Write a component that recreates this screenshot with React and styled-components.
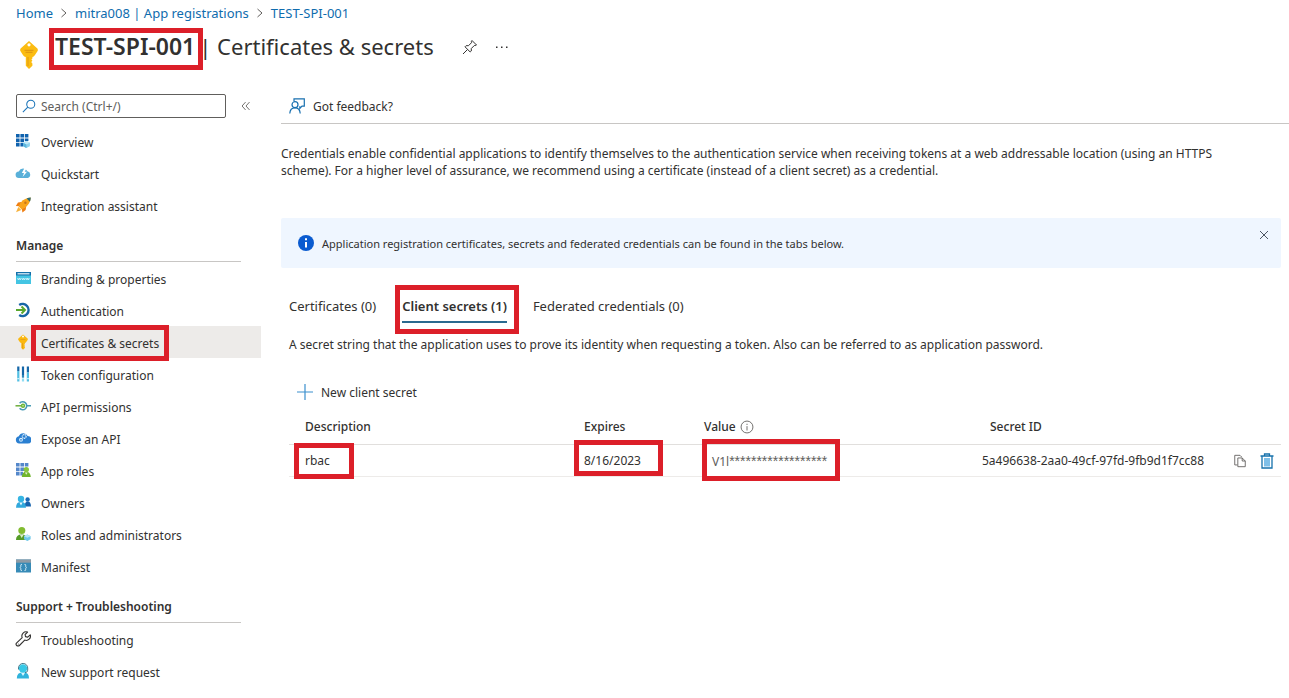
import React from "react"
import styled, { createGlobalStyle } from "styled-components"

const GlobalStyle = createGlobalStyle`
  *, *::before, *::after { box-sizing: border-box; }
  body {
    margin: 0;
    background: #fff;
    color: #323130;
    font-family: "Noto Sans", "Open Sans", sans-serif;
    font-size: 12px;
    line-height: 18px;
  }
  button, input { font: inherit; color: inherit; }
  a { color: inherit; text-decoration: none; }
  h1, h2, p, ul, ol { margin: 0; padding: 0; }
  ul, ol { list-style: none; }
  svg { display: block; flex: none; }
`

// red frame drawn over the part, "top right bottom left" outset
const Marked = styled.span`
  position: relative;

  &::after {
    content: "";
    position: absolute;
    inset: ${({ $inset }) => $inset};
    border: 5px solid #dc1f29;
    pointer-events: none;
  }
`

const Page = styled.div`
  padding-bottom: 8px;
`

const Breadcrumb = styled.ol`
  display: flex;
  align-items: center;
  gap: 8px;
  padding: 4px 16px 0;
  color: #0f6cae;
  font-size: 13px;
`

const Crumb = styled.li`
  display: flex;
  align-items: center;
  gap: 8px;
`

const TitleBar = styled.header`
  display: flex;
  align-items: center;
  height: 50px;
  padding: 0 16px;
`

const KeySlot = styled.div`
  width: 39px;
  padding: 15px 0 0 4px;
`

const Title = styled.h1`
  display: flex;
  align-items: baseline;
  gap: 4px;
  padding-bottom: 2px;
  font-size: 22px;
  font-weight: 400;
  line-height: 30px;
`

const TitleName = styled(Marked)`
  font-size: 23px;
  font-weight: 600;
`

const IconButton = styled.button`
  display: inline-flex;
  align-items: center;
  justify-content: center;
  width: 16px;
  height: 16px;
  padding: 0;
  border: 0;
  background: none;
`

const TitleTools = styled.div`
  display: flex;
  gap: 16px;
  padding-left: 28px;
`

const Body = styled.div`
  display: flex;
  align-items: flex-start;
  padding-top: 22px;
`

const Sidebar = styled.nav`
  flex: none;
  width: 261px;
`

const SearchRow = styled.div`
  display: flex;
  align-items: center;
  gap: 12px;
  height: 24px;
  margin-bottom: 7px;
  padding-left: 16px;
`

const SearchBox = styled.label`
  display: flex;
  align-items: center;
  gap: 5px;
  width: 210px;
  height: 24px;
  padding: 0 5px;
  border: 1px solid #605e5c;
  border-radius: 2px;
`

const SearchInput = styled.input`
  flex: 1;
  min-width: 0;
  padding: 2px 0 0;
  border: 0;
  outline: 0;
  background: none;

  &::placeholder {
    color: #605e5c;
    opacity: 1;
  }
`

const GroupTitle = styled.h2`
  height: 41px;
  margin: 0 20px 0 16px;
  padding-top: 16px;
  border-bottom: 1px solid #c8c6c4;
  font-size: 12px;
  font-weight: 600;
`

const NavLink = styled.a`
  display: flex;
  align-items: center;
  gap: 10px;
  height: 32px;
  padding-left: 15px;
  background: ${({ $active }) => ($active ? "#edebe9" : "none")};
`

const NavLabel = styled.span`
  padding-top: 4px;
`

const Main = styled.main`
  flex: 1;
  min-width: 0;
  padding-left: 20px;
`

const Toolbar = styled.div`
  height: 30px;
  border-bottom: 1px solid #c8c6c4;
`

const CommandButton = styled.button`
  display: flex;
  align-items: center;
  gap: 8px;
  height: 24px;
  padding: 0 8px;
  border: 0;
  background: none;
`

const Label = styled.span`
  padding-top: 2px;
`

const Intro = styled.p`
  max-width: 980px;
  padding: 21px 8px 0 0;
  line-height: 17px;
`

const Banner = styled.div`
  display: flex;
  align-items: center;
  gap: 8px;
  height: 50px;
  margin: 39px 8px 0 0;
  padding: 0 9px 0 17px;
  border-radius: 2px;
  background: #eff6ff;
  font-size: 11px;
`

const BannerText = styled(Label)`
  flex: 1;
`

const BannerClose = styled(IconButton)`
  align-self: flex-start;
  margin-top: 9px;
`

const Section = styled.section`
  padding: 24px 8px 0;
`

const Tabs = styled.div`
  display: flex;
  gap: 26px;
  margin-bottom: 13px;
  font-size: 13px;
`

const Tab = styled.button`
  height: 31px;
  padding: 0 0 2px;
  border: 0;
  background: none;
  border-bottom: 2px solid ${({ $active }) => ($active ? "#2b6a8f" : "transparent")};
  font-weight: ${({ $active }) => ($active ? 600 : 400)};
`

const NewSecret = styled(CommandButton)`
  margin: 26px 0 8px;
`

const SecretTable = styled.table`
  width: 100%;
  border-collapse: collapse;
  table-layout: fixed;
`

const Head = styled.th`
  height: 32px;
  padding: 0 0 2px 16px;
  border-bottom: 1px solid #e1dfdd;
  font-weight: 500;
  text-align: left;
`

const Cell = styled.td`
  height: 32px;
  padding: 2px 0 0 ${({ $pad = 16 }) => $pad}px;
  border-bottom: 1px solid #edebe9;
  color: ${({ $muted }) => ($muted ? "#605e5c" : "inherit")};
`

const Mask = styled.span`
  font-family: "Liberation Sans", Arial, sans-serif;
  font-size: 14px;
`

const Inline = styled.span`
  display: flex;
  align-items: center;
  gap: ${({ $gap }) => $gap}px;
`

const Svg = ({ size = 16, children, ...rest }) => (
  <svg width={size} height={size} viewBox="0 0 16 16" fill="none" aria-hidden="true" {...rest}>
    {children}
  </svg>
)

const Chevron = () => (
  <svg width="6" height="10" viewBox="0 0 6 10" fill="none" stroke="#605e5c" aria-hidden="true">
    <path d="M.5 1 5 5 .5 9" />
  </svg>
)

const KeyShape = ({ width, height }) => (
  <svg width={width} height={height} viewBox="0 0 18 28" aria-hidden="true">
    <path
      d="M9 0 17.4 7.6Q18.4 9 17.3 10.6L14.8 14.2Q13.8 15.6 12.4 16V17.5L11.4 18.6 12.4 19.8 11.2 21 12.4 22.4V24.8L9 28 5.8 24.8V16Q4 15.6 3.1 14.2L.7 10.6Q-.4 9 .6 7.6Z"
      fill="#fbbc12"
    />
    <circle cx="9" cy="3.8" r="1.6" fill="#fff" />
    <path d="M4.5 9.3h9M5.5 11.3h7" stroke="#dd9314" strokeWidth="1" />
    <path d="M8 16v9" stroke="#e6a014" strokeWidth="1.2" />
  </svg>
)

const icons = {
  overview: (
    <Svg>
      <path d="M1 1h3.6v3.6H1zM5.4 1H9v3.6H5.4zM9.8 1h3.6v3.6H9.8zM1 5.4h3.6V9H1zM5.4 5.4H9V9H5.4zM9.8 5.4h3.6V8H9.8zM1 9.8h3.6v3.6H1zM5.4 9.8H8v3.6H5.4z" fill="#0f62ae" />
      <path d="m11.4 8 3.5 1.8v3.4l-3.5 1.9-3.3-1.9V9.8z" fill="#8cd2ee" />
      <path d="m8.1 9.8 3.3 1.6 3.5-1.6-3.5-1.8z" fill="#c2e9f8" />
      <path d="M8.1 9.8v3.4l3.3 1.9v-3.7z" fill="#5ab4dc" />
    </Svg>
  ),
  quickstart: (
    <Svg>
      <path d="M4 13A3.3 3.3 0 0 1 3.8 6.4 4.7 4.7 0 0 1 12.4 6.2 3.5 3.5 0 0 1 12.7 13Z" fill="#59b0d9" />
      <path d="M9.8 2.5 6.8 8h2.2l-1.4 4 4.4-5.2H9.7L12 2.5Z" fill="#fff" />
    </Svg>
  ),
  rocket: (
    <Svg>
      <path d="M6.5 5 3 5.6.8 9l4 .2ZM11.2 9.8 10.6 13 7.4 15.6l-.6-4Z" fill="#ef7f14" />
      <path d="M15.8.5Q9.5 1 6 5.2L3.6 9.4 6.8 12.5 11 9.9Q15.4 6 15.8.5Z" fill="#f9a51c" />
      <path d="M15.8.5Q13.6.6 11.6 1.4L14.9 4.7Q15.7 2.6 15.8.5Z" fill="#2d6e78" />
      <circle cx="10.4" cy="5.8" r="1.2" fill="#c8761b" />
      <path d="M3.3 10 1 15.3 6.3 13Z" fill="#f7b23c" />
    </Svg>
  ),
  branding: (
    <Svg>
      <path d="M1 3h15v11H1z" fill="#44c5e3" />
      <path d="M1 2h15v3.5H1z" fill="#1470aa" />
      <path d="M2.5 3.2h12v1.2h-12z" fill="#e6f4fa" />
      <path d="m2.5 8 .9 2 .9-2 .9 2 .9-2m.7 0 .9 2 .9-2 .9 2 .9-2m.7 0 .8 2 .8-2 .8 2 .8-2" stroke="#e8fbff" strokeWidth=".7" />
    </Svg>
  ),
  auth: (
    <Svg>
      <path d="M4.2 3A6 6 0 1 1 4.2 13" stroke="#1766a6" strokeWidth="2.5" />
      <path d="M1 8h8.500M6.500 4.500 10 8l-3.500 3.500" stroke="#58a72c" strokeWidth="1.9" />
    </Svg>
  ),
  key: (
    <Svg>
      <path d="M8 .5 12.6 4.4Q13.2 5.2 12.6 6L11.2 8Q10.5 8.9 9.9 9V10l-.6.7.6.7-.6.7.6.7V14L8 15.7 6.3 14V9Q5.5 8.9 4.8 8L3.4 6Q2.8 5.2 3.4 4.4Z" fill="#fbb80f" />
      <circle cx="8" cy="2.6" r="1" fill="#fff" />
      <path d="M5.5 5.5h5M7.5 9v5.5" stroke="#e39c12" strokeWidth=".8" />
    </Svg>
  ),
  token: (
    <Svg>
      <path d="M3.3.5v4.5M8 .5v8.5M12.900.5v6" stroke="#1667a8" strokeWidth="2.2" />
      <path d="M3.3 5v10.500M12.900 6.500v9" stroke="#52bfe3" strokeWidth="2.2" />
      <path d="M8 9v2.700" stroke="#2c87b9" strokeWidth="2.2" />
      <path d="M8 12.500v3" stroke="#90dcf2" strokeWidth="2.2" />
      <path d="M3.3 12v1.2M12.9 12v1.2" stroke="#c9eff9" strokeWidth="2.2" />
    </Svg>
  ),
  permissions: (
    <Svg>
      <path d="M4.6 5.3A4 4 0 1 1 4.6 10.3M12.2 7.8H16" stroke="#499bb4" strokeWidth="1.5" />
      <path d="M.5 7.8h6" stroke="#6cad3c" strokeWidth="1.5" />
      <circle cx="8" cy="7.8" r="2.2" fill="#6eb538" />
      <circle cx="8" cy="7.8" r=".8" fill="#d2efb5" />
    </Svg>
  ),
  expose: (
    <Svg>
      <path d="M4.2 13.500A3.700 3.700 0 0 1 3.800 6.200 4.900 4.900 0 0 1 12.700 6.100 3.700 3.700 0 0 1 12.800 13.500Z" fill="#2a7fd1" />
      <circle cx="6" cy="9.800" r="1.400" stroke="#d7eefc" strokeWidth="1.1" />
      <circle cx="9.200" cy="6.400" r="1.900" stroke="#eaf6fe" strokeWidth="1.2" strokeDasharray="1.2 .5" />
    </Svg>
  ),
  roles: (
    <Svg>
      <path d="M1 1h3.6v3.6H1zM5.4 1H9v3.6H5.4zM9.8 1h3.6v3.6H9.8zM1 5.4h3.6V9H1zM5.4 5.4H9V9H5.4zM1 9.8h3.6v3.6H1zM5.4 9.8H8v3.6H5.4z" fill="#5487ca" />
      <path d="M6.8 15Q7 9.8 11.2 9.8T15.8 15Z" fill="#71b52d" />
      <circle cx="11.3" cy="7.6" r="2.7" fill="#87c53d" />
      <path d="m9.9 10.4 1.4 2.4 1.4-2.4Z" fill="#e2f2ce" />
    </Svg>
  ),
  owners: (
    <Svg>
      <path d="M9.5 12.5Q9.8 7.5 12.8 7.5T16 12.5Z" fill="#1763ae" />
      <circle cx="12.6" cy="5.5" r="2.2" fill="#1a6bb8" />
      <path d="M1 13.8Q1 7.8 6 7.8T11 13.8Z" fill="#31a8dc" />
      <circle cx="6" cy="5" r="3.2" fill="#36b5e3" />
      <path d="M4.4 8.4 6 11.6 7.6 8.4Z" fill="#eafaff" />
    </Svg>
  ),
  admins: (
    <Svg>
      <path d="M1 14Q1 8.5 6.5 8.5T12 14Z" fill="#559c27" />
      <circle cx="6.8" cy="4.5" r="3.5" fill="#82bc31" />
      <path d="m5 9 1.7 3 1.8-3Z" fill="#dcefc6" />
      <path d="m12.3 8.5 3.3 1.7v3l-3.3 1.8L9 13.2v-3z" fill="#6cc7e8" />
      <path d="m9 10.2 3.3 1.6 3.3-1.6-3.3-1.7z" fill="#b8e6f6" />
    </Svg>
  ),
  manifest: (
    <Svg>
      <path d="M1 1.5h15v13H1z" fill="#378bb7" />
      <path d="M1 1.5h15v3.2H1z" fill="#8e9ba5" />
      <path d="M7 6.5H6.2q-.4 0-.4.8V8.5l-.6 1 .6 1v1.2q0 .8.4.8H7M9.5 6.5h.8q.4 0 .4.8v1.2l.6 1-.6 1v1.2q0 .8-.4.8h-.8" stroke="#e5f5fb" strokeWidth=".9" />
    </Svg>
  ),
  wrench: (
    <Svg>
      <path d="M12.6 1.1A4.2 4.2 0 0 0 7.2 6.6L1.7 11.8A1.9 1.9 0 0 0 4.4 14.5L9.7 9.1A4.2 4.2 0 0 0 15.2 3.8L12.7 6.1 10.5 5.6 10.1 3.5Z" stroke="#323130" strokeWidth="1.1" strokeLinejoin="round" />
      <circle cx="3.3" cy="12.9" r=".5" fill="#323130" />
    </Svg>
  ),
  support: (
    <Svg>
      <path d="M1.8 15.5Q1.8 9.2 8 9.2T14 15.5Z" fill="#30b3dc" />
      <circle cx="8" cy="5.5" r="4.2" fill="#38c8e6" />
      <path d="M3.5 6.5V5A4.6 4.6 0 0 1 12.7 5v2.2Q12.7 9.4 10 9.7" stroke="#477b8d" strokeWidth="1" />
      <path d="m6 9.7 2 3.3 2-3.3Z" fill="#d9f7fe" />
    </Svg>
  ),
}

const links = [
  ["overview", "Overview"],
  ["quickstart", "Quickstart"],
  ["rocket", "Integration assistant"],
]

const manageLinks = [
  ["branding", "Branding & properties"],
  ["auth", "Authentication"],
  ["key", "Certificates & secrets", true],
  ["token", "Token configuration"],
  ["permissions", "API permissions"],
  ["expose", "Expose an API"],
  ["roles", "App roles"],
  ["owners", "Owners"],
  ["admins", "Roles and administrators"],
  ["manifest", "Manifest"],
]

const supportLinks = [
  ["wrench", "Troubleshooting"],
  ["support", "New support request"],
]

const NavList = ({ items }) => (
  <ul>
    {items.map(([icon, label, active]) => (
      <li key={label}>
        <NavLink href="#" $active={active} aria-current={active ? "page" : undefined}>
          {icons[icon]}
          <NavLabel>
            {active ? <Marked $inset="-10px -10px -9px -10px">{label}</Marked> : label}
          </NavLabel>
        </NavLink>
      </li>
    ))}
  </ul>
)

const SideMenu = () => (
  <Sidebar>
    <SearchRow>
      <SearchBox>
        <Svg size={14} stroke="#1b74b8" strokeWidth="1.2">
          <circle cx="10" cy="6" r="4.6" />
          <path d="M6.6 9.3 1 15" />
        </Svg>
        <SearchInput type="text" placeholder="Search (Ctrl+/)" aria-label="Search" />
      </SearchBox>
      <IconButton aria-label="Collapse menu">
        <Svg size={14} stroke="#605e5c">
          <path d="M7.5 3.5 3.5 8l4 4.5M12 3.5 8 8l4 4.5" />
        </Svg>
      </IconButton>
    </SearchRow>
    <NavList items={links} />
    <GroupTitle>Manage</GroupTitle>
    <NavList items={manageLinks} />
    <GroupTitle>Support + Troubleshooting</GroupTitle>
    <NavList items={supportLinks} />
  </Sidebar>
)

const Secrets = () => (
  <SecretTable>
    <colgroup>
      <col style={{ width: 279 }} />
      <col style={{ width: 120 }} />
      <col />
      <col style={{ width: 255 }} />
      <col style={{ width: 52 }} />
    </colgroup>
    <thead>
      <tr>
        <Head scope="col">Description</Head>
        <Head scope="col">Expires</Head>
        <Head scope="col">
          <Inline $gap={4}>
            Value
            <Svg size={14} stroke="#605e5c">
              <circle cx="8" cy="8" r="6.8" />
              <path d="M8 7v5M8 4.3v1.4" />
            </Svg>
          </Inline>
        </Head>
        <Head scope="col">Secret ID</Head>
        <Head as="td" />
      </tr>
    </thead>
    <tbody>
      <tr>
        <Cell>
          <Marked $inset="-9px -24px -10px -11px">rbac</Marked>
        </Cell>
        <Cell>
          <Marked $inset="-12px -22px -7px -10px">8/16/2023</Marked>
        </Cell>
        <Cell $pad={24} $muted>
          <Marked $inset="-14px -13px -11px -10px">
            V1l<Mask>******************</Mask>
          </Marked>
        </Cell>
        <Cell $pad={8}>5a496638-2aa0-49cf-97fd-9fb9d1f7cc88</Cell>
        <Cell $pad={3}>
          <Inline $gap={11}>
            <IconButton aria-label="Copy to clipboard">
              <Svg size={14} stroke="#605e5c">
                <path d="M5 12.5H2V1.5h6l2 2M5.5 4.5h5l3.5 3.5v6.5H5.5zM10.5 4.5V8H14" />
              </Svg>
            </IconButton>
            <IconButton aria-label="Delete">
              <Svg>
                <path d="M1.5 3h13M5.5 3V1h5v2M3 3v12h10V3" stroke="#1672ac" strokeWidth="1.3" />
                <path d="M5 5h6v8.5H5z" fill="#7ebfe8" />
              </Svg>
            </IconButton>
          </Inline>
        </Cell>
      </tr>
    </tbody>
  </SecretTable>
)

const App = () => (
  <Page>
    <GlobalStyle />
    <Breadcrumb>
      <Crumb>
        <a href="#">Home</a>
        <Chevron />
      </Crumb>
      <Crumb>
        <a href="#">mitra008 | App registrations</a>
        <Chevron />
      </Crumb>
      <Crumb>
        <a href="#">TEST-SPI-001</a>
      </Crumb>
    </Breadcrumb>
    <TitleBar>
      <KeySlot>
        <KeyShape width={18} height={28} />
      </KeySlot>
      <Title>
        <TitleName $inset="-3px -8px -9px -6px">TEST-SPI-001</TitleName>
        <span>| Certificates &amp; secrets</span>
      </Title>
      <TitleTools>
        <IconButton aria-label="Pin">
          <Svg stroke="#323130">
            <path d="M10 1.5 14.5 6 13.2 6.6 12.3 6.5 9.3 9.5V12L8.2 13 3 7.8 4.1 6.7H6.5L9.5 3.7 9.3 2.7ZM5.5 10.5 1 15" />
          </Svg>
        </IconButton>
        <IconButton aria-label="More">
          <Svg>
            <path d="M2 7.5h1.5V9H2zM7 7.5h1.5V9H7zM12 7.5h1.5V9H12z" fill="#323130" />
          </Svg>
        </IconButton>
      </TitleTools>
    </TitleBar>
    <Body>
      <SideMenu />
      <Main>
        <Toolbar>
          <CommandButton>
            <Svg stroke="#1870b0" strokeWidth="1.2">
              <path d="M5 3V.8h10.3v7.4H13L10.8 10.5V8.2" />
              <circle cx="6" cy="6.7" r="3" />
              <path d="M.8 15.5Q1 9.8 6 9.8T11.2 15.5" />
            </Svg>
            <Label>Got feedback?</Label>
          </CommandButton>
        </Toolbar>
        <Intro>
          Credentials enable confidential applications to identify themselves to the authentication
          service when receiving tokens at a web addressable location (using an HTTPS scheme). For a
          higher level of assurance, we recommend using a certificate (instead of a client secret)
          as a credential.
        </Intro>
        <Banner>
          <Svg>
            <circle cx="8" cy="8" r="8" fill="#0a5bd0" />
            <path d="M8 7v5.5M8 3.3v2" stroke="#fff" strokeWidth="2" />
          </Svg>
          <BannerText>
            Application registration certificates, secrets and federated credentials can be found in
            the tabs below.
          </BannerText>
          <BannerClose aria-label="Dismiss">
            <Svg stroke="#4b5563">
              <path d="m4 4 8 8m0-8-8 8" />
            </Svg>
          </BannerClose>
        </Banner>
        <Section>
          <Tabs role="tablist">
            <Tab role="tab">Certificates (0)</Tab>
            <Tab role="tab" aria-selected="true" $active>
              <Marked $inset="-12px -12px -19px -7px">Client secrets (1)</Marked>
            </Tab>
            <Tab role="tab">Federated credentials (0)</Tab>
          </Tabs>
          <p>
            A secret string that the application uses to prove its identity when requesting a token.
            Also can be referred to as application password.
          </p>
          <NewSecret>
            <Svg stroke="#3b8fce" strokeWidth="1.2">
              <path d="M8 0v16M0 8h16" />
            </Svg>
            <Label>New client secret</Label>
          </NewSecret>
          <Secrets />
        </Section>
      </Main>
    </Body>
  </Page>
)

export default App
